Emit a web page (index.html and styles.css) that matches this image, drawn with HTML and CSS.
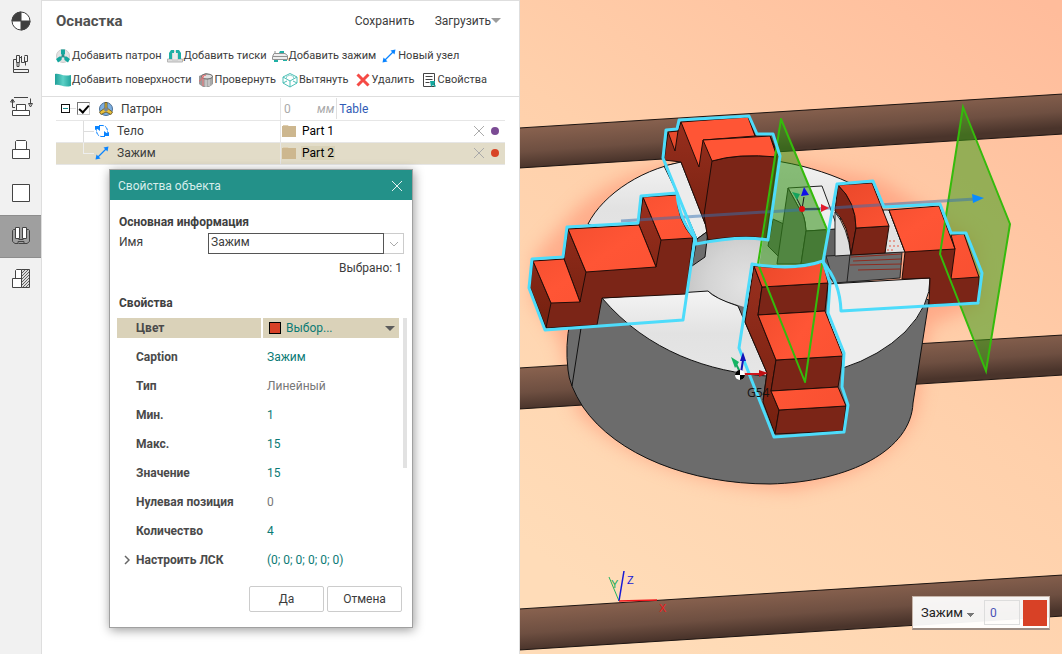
FILE: index.html
```html
<!DOCTYPE html>
<html lang="ru">
<head>
<meta charset="utf-8">
<title>Оснастка</title>
<link rel="stylesheet" href="styles.css">
</head>
<body>
<div class="app">
  <nav class="rail" aria-label="Разделы">
    <button class="rail-btn" type="button" aria-label="Ноль детали">
      <svg class="rail-icon" viewBox="0 0 25 25"><circle cx="13" cy="12" r="9" fill="#fff" stroke="#3f3f3f"/><path d="M13 12V3a9 9 0 0 0-9 9zM13 12h9a9 9 0 0 1-9 9z" fill="#3f3f3f"/></svg>
    </button>
    <button class="rail-btn" type="button" aria-label="Станок">
      <svg class="rail-icon" viewBox="0 0 25 25"><path d="M8 7.500H5.500V17.500M5.500 17.500h15v3h-15zM8.500 3.500h3v7h-3zM13.500 4v6.500h3v-6M16.500 3.500h3v6h-3M9 10.500v4h2v-4M17.500 9.500v4M11.500 5.500h2"/></svg>
    </button>
    <button class="rail-btn" type="button" aria-label="Рабочая зона">
      <svg class="rail-icon" viewBox="0 0 25 25"><path class="pale" d="M8.500 9.500h9v6h-9zM4.500 15.500h17v5h-17z"/><path d="M6 2.500h14M4.500 12.500V5M2.500 7l2-3 2 3zM7 12.500H4.500M22.500 3.500v6M20.500 8.500h4l-2 3.500z"/></svg>
    </button>
    <button class="rail-btn" type="button" aria-label="Деталь">
      <svg class="rail-icon" viewBox="0 0 25 25"><path class="pale" d="M7.500 11.500v-8l1-1h9l1 1v8M4.500 11.500h17v9h-17z"/></svg>
    </button>
    <button class="rail-btn" type="button" aria-label="Заготовка">
      <svg class="rail-icon" viewBox="0 0 25 25"><path class="pale" d="M4.500 3.500h17v17h-17z"/></svg>
    </button>
    <button class="rail-btn is-active" type="button" aria-label="Оснастка" aria-current="page">
      <svg class="rail-icon" viewBox="0 0 25 25"><path d="M7.500 5.500h-2l-1 1v11l2.500 2h3v-2h6v2h3l2.500-2v-11l-1-1h-2M10.500 15.500h5M10.500 19.500h6"/><path class="pale" d="M7.500 3.500h4v11h-4zM14.500 3.500h4v11h-4z"/></svg>
    </button>
    <button class="rail-btn" type="button" aria-label="Ограничения">
      <svg class="rail-icon" viewBox="0 0 25 25"><path class="pale" d="M7.500 11.500v-8l1-1h5v9M4.500 11.500h9v9h-9z"/><path fill="#ddd" d="M13.500 2.500h8v18h-8z"/><path stroke-width=".8" d="M14 6l3-3M14 9l6-6M14 12l7-7M14 15l7-7M14 18l7-7M15 20l6-6M18 20l3-3"/></svg>
    </button>
  </nav>

  <main class="panel">
    <header class="panel-head">
      <h1 class="panel-title">Оснастка</h1>
      <button class="head-btn" type="button">Сохранить</button>
      <button class="head-btn" type="button">Загрузить<span class="caret"></span></button>
    </header>

    <div class="toolbar">
      <div class="tool-row">
        <button class="tool" type="button"><svg class="icon" viewBox="0 0 16 16"><circle cx="8" cy="8" r="6.500" fill="#e3e3e3" stroke="#ccc"/><path d="M6 1.500h4v4.500L8 8 6 6zM7 8.500L6.500 12 3 14.500 1 11l3.500-2.500zM9 8.500l.5 3.500 3.500 2.500 2-3.500-3.500-2.500z" fill="#14a79e"/><circle cx="8" cy="8" r="1.600" fill="#2b8c86"/></svg>Добавить патрон</button>
        <button class="tool" type="button"><svg class="icon" viewBox="0 0 16 16"><path d="M.5 11h15v3H.5z" fill="#dedede" stroke="#b5b5b5"/><path d="M5 3h6v9H5z" fill="#ececec" stroke="#c4c4c4"/><path d="M2 11V5l2-3h3v3H5v6zM14 11V5l-2-3H9v3h2v6z" fill="#1fafa5"/></svg>Добавить тиски</button>
        <button class="tool" type="button"><svg class="icon" viewBox="0 0 16 16"><path d="M.5 8.500L2 5.500h11l2.500 2v4H.5z" fill="#eee" stroke="#929292"/><path d="M1 8.500h14M3 5.500V3" stroke="#929292"/><path d="M8 3h4v2H7zM2 12h4v2H2zM11 12h4v1h-4z" fill="#1fafa5"/></svg>Добавить зажим</button>
        <button class="tool" type="button"><svg class="icon" viewBox="0 0 16 16"><path d="M3.500 12.500l9-9" stroke="#0a84ff" stroke-width="1.300"/><path d="M14.500 1.500l-1 5-4-4zM1.500 14.500l1-5 4 4z" fill="#0a84ff"/></svg>Новый узел</button>
      </div>
      <div class="tool-row">
        <button class="tool" type="button"><svg class="icon" viewBox="0 0 16 16"><path d="M0 2c5-1 7 3 16 1v11c-8 2-11-2-16-1z" fill="url(#sheet)"/></svg>Добавить поверхности</button>
        <button class="tool" type="button"><svg class="icon" viewBox="0 0 16 16"><path d="M1 4l7-3 7 3v8l-4 3H5l-4-3z" fill="#999"/><path d="M4 5v8q5 3 10 0V5" fill="#aaa"/><path d="M8 7v8M11 7v7" stroke="#ddd"/><ellipse cx="9" cy="4.500" rx="5.500" ry="2.500" fill="#ddd" stroke="#666"/><path d="M1 9c3 0 2-5 7-6M5 3v11" fill="none" stroke="#e9686c"/></svg>Провернуть</button>
        <button class="tool" type="button"><svg class="icon" viewBox="0 0 16 16"><path d="M8 1.500l7 3.500v6l-7 4-7-4V5zM1 5l7 4 7-4M8 9v6M1 11l4-2M15 11l-4-2" fill="none" stroke="#4cbfb6"/><path d="M4.500 7V4.500L8 3l3.500 1.500V7" fill="none" stroke="#8dd6d0"/></svg>Вытянуть</button>
        <button class="tool" type="button"><svg class="icon" viewBox="0 0 16 16"><path d="M2.500 2.500l11 11M13.500 2.500l-11 11" stroke="#f54a45" stroke-width="3"/></svg>Удалить</button>
        <button class="tool" type="button"><svg class="icon" viewBox="0 0 16 16"><path d="M2.500 1.500h11v13h-11z" fill="#fff" stroke="#444"/><path d="M4.500 4.500h7M4.500 7.500h7M4.500 10.500h4" stroke="#444"/><path d="M9 9h5v2l-1 1 2 2-1 1-2-2-2 2z" fill="#14a79e"/></svg>Свойства</button>
      </div>
    </div>

    <table class="tree">
      <tbody>
        <tr class="tree-row">
          <td class="tree-name root">
            <button class="expander" type="button" aria-label="Свернуть"></button>
            <span class="dash"></span>
            <input class="tick" type="checkbox" id="node" checked>
            <svg class="icon" viewBox="0 0 16 16"><circle cx="8" cy="8" r="6.500" fill="#7dafe0" stroke="#4d6f94"/><path d="M7 1.500h2v5.500l5.500 4-1.500 2.500L8 11 3 13.500 1.500 11 7 7z" fill="#e9c13c" stroke="#63511b" stroke-width=".8"/><circle cx="8" cy="8.500" r="2" fill="#7b8791"/></svg>
            <label for="node">Патрон</label>
          </td>
          <td class="tree-value">
            <div class="value">
              <input class="offset" type="text" value="0" aria-label="Смещение"><span class="unit">мм</span>
              <a class="link" href="#table">Table</a>
            </div>
          </td>
        </tr>
        <tr class="tree-row">
          <td class="tree-name child">
            <span class="branch"></span>
            <svg class="icon" viewBox="0 0 16 16"><path d="M5 2.500h4q4 1 4.500 5v2M11 13.500H7q-4-1-4.500-5v-2" fill="none" stroke="#0a84ff" stroke-dasharray="5 1"/><path d="M1 3h5v5L3.500 6 1 7zM15 13h-5V8l2.500 2L15 9z" fill="#0a84ff"/></svg>
            <span>Тело</span>
          </td>
          <td class="tree-value">
            <div class="value">
              <svg class="icon" viewBox="0 0 16 16"><path d="M2 2h5l1 2H2z" fill="#e0cfaf"/><path d="M1 3h14v11H1z" fill="#cdb78f"/></svg>
              <span class="part">Part 1</span>
              <button class="clear" type="button" aria-label="Убрать"><svg class="cross" viewBox="0 0 12 12"><path d="M1 1l10 10M11 1L1 11" stroke="#aaa"/></svg></button>
              <span class="dot violet"></span>
            </div>
          </td>
        </tr>
        <tr class="tree-row is-selected">
          <td class="tree-name child">
            <span class="branch last"></span>
            <svg class="icon" viewBox="0 0 16 16"><path d="M3.500 12.500l9-9" stroke="#0a84ff" stroke-width="1.300"/><path d="M14.500 1.500l-1 5-4-4zM1.500 14.500l1-5 4 4z" fill="#0a84ff"/></svg>
            <span>Зажим</span>
          </td>
          <td class="tree-value">
            <div class="value">
              <svg class="icon" viewBox="0 0 16 16"><path d="M2 2h5l1 2H2z" fill="#e0cfaf"/><path d="M1 3h14v11H1z" fill="#cdb78f"/></svg>
              <span class="part">Part 2</span>
              <button class="clear" type="button" aria-label="Убрать"><svg class="cross" viewBox="0 0 12 12"><path d="M1 1l10 10M11 1L1 11" stroke="#aaa"/></svg></button>
              <span class="dot red"></span>
            </div>
          </td>
        </tr>
      </tbody>
    </table>
  </main>

  <section class="viewport" aria-label="3D-вид">
    <svg class="scene" viewBox="520 0 542 654" preserveAspectRatio="xMidYMid slice">
      <defs>
        <linearGradient id="sheet"><stop offset="0" stop-color="#1f9f98"/><stop offset=".5" stop-color="#5cd0c6"/><stop offset="1" stop-color="#23a59d"/></linearGradient>
        <linearGradient id="floor" gradientUnits="userSpaceOnUse" x1="600" y1="600" x2="1040" y2="0"><stop offset="0" stop-color="#ffdcb8"/><stop offset=".5" stop-color="#ffd0ab"/><stop offset="1" stop-color="#ffbc9b"/></linearGradient>
        <linearGradient id="bar1" gradientUnits="userSpaceOnUse" x1="520" y1="128" x2="523" y2="168"><stop offset="0" stop-color="#89624f"/><stop offset=".6" stop-color="#6e4f41"/><stop offset="1" stop-color="#4a342b"/></linearGradient>
        <linearGradient id="bar2" gradientUnits="userSpaceOnUse" x1="520" y1="368" x2="523" y2="409"><stop offset="0" stop-color="#89624f"/><stop offset=".6" stop-color="#6e4f41"/><stop offset="1" stop-color="#4a342b"/></linearGradient>
        <linearGradient id="bar3" gradientUnits="userSpaceOnUse" x1="520" y1="609" x2="523" y2="650"><stop offset="0" stop-color="#89624f"/><stop offset=".6" stop-color="#6e4f41"/><stop offset="1" stop-color="#4a342b"/></linearGradient>
        <linearGradient id="disk" x1="0" y1="0" x2="0" y2="1"><stop offset="0" stop-color="#f4f4f4"/><stop offset=".5" stop-color="#e2e2e2"/><stop offset="1" stop-color="#e6e6e6"/></linearGradient>
        <radialGradient id="bore" gradientUnits="userSpaceOnUse" cx="745" cy="285" r="75"><stop offset="0" stop-color="#e2e2e2"/><stop offset=".5" stop-color="#d4d4d4"/><stop offset="1" stop-color="#bdbdbd"/></radialGradient>
        <linearGradient id="side" x1="0" y1="0" x2="0" y2="1"><stop offset="0" stop-color="#992f1e"/><stop offset="1" stop-color="#74200f"/></linearGradient>
        <linearGradient id="ledge" x1="0" y1="0" x2="1" y2="1"><stop offset="0" stop-color="#ea482a"/><stop offset=".5" stop-color="#ff5535"/><stop offset="1" stop-color="#f85031"/></linearGradient>
        <filter id="soft" x="-20%" y="-20%" width="140%" height="140%"><feGaussianBlur stdDeviation="9"/></filter>
      </defs>

      <rect x="520" width="542" height="654" fill="url(#floor)"/>
      <path d="M575 210Q640 150 780 160L880 180 975 240 980 305 930 325 916 410Q895 470 790 490 650 483 577 412L560 340 532 300 535 255Z" fill="#ff8767" opacity=".5" filter="url(#soft)"/>
      <g stroke="#1d1512">
        <path d="M519 128L1063 94V134L519 168z" fill="url(#bar1)"/>
        <path d="M519 368L1063 335V375L519 409z" fill="url(#bar2)"/>
        <path d="M519 609L1063 575V616L519 650z" fill="url(#bar3)"/>
      </g>
      <path d="M963 107L1010 224 986 371 940 254z" fill="#3e9a17" fill-opacity=".55"/>

      <g stroke="#111" stroke-linejoin="round">
        <path d="M570 322Q565 345 568 370 569 385 583 407C616 455 690 484 770 484 850 482 911 450 913 403L929 300 740 240 600 290z" fill="#6c6c6c"/>
        <path d="M581 328L572 386" fill="none"/>
        <path d="M588 224C603 194 645 166 690 161 745 153 800 160 850 183L835 240 760 245 690 260z" fill="url(#disk)"/>
        <path d="M692 238L708 231 706 220 830 220 838 284 760 312 722 300 708 291 684 294z" fill="url(#bore)" stroke="none"/>
        <path d="M681 162L708 231 697 239 678 195 664 166z" fill="#ececec"/>
        <path d="M697 239L708 231 705 257 692 266z" fill="#6e6e6e"/>
        <path d="M602 298L708 291Q714 298 738 306L767 373V376C710 372 648 352 602 298z" fill="url(#disk)"/>
        <path d="M828 284L930 278Q931 305 905 332 880 356 843 368L828 320z" fill="#ededed"/>
        <path d="M767 373L763 400" fill="none"/>
      </g>

      <!-- back jaw -->
      <g stroke="#210c08" stroke-linejoin="round">
        <path d="M668 132L678 131 681 122 748 117 755 136 770 136 779 158 767 239Q740 235 708 241L706 226 681 162 664 160z" fill="url(#side)"/>
        <path d="M712 161Q740 153 777 157L766 238Q740 235 708 240L704 215z" fill="#7b2517"/>
        <path d="M668 132L678 131 675 151z" fill="#e84a2c"/>
        <path d="M681 122L748 117 755 136 703 140 699 167z" fill="#ff5535"/>
        <path d="M703 140L770 136 777 157Q738 153 712 161z" fill="#ff5535"/>
      </g>

      <!-- centre insert -->
      <g stroke="#222" stroke-linejoin="round">
        <path d="M773 219L788 226 786 256 780 258 768 246z" fill="#6a6a6a"/>
        <path d="M788 188L822 186 838 229 806 231Q805 214 799 208z" fill="#eee"/>
        <path d="M788 188L799 208Q805 214 806 231L801 264H777z" fill="#7a7a7a"/>
        <path d="M806 231L838 229 834 283 820 264H801z" fill="#626262"/>
        <path d="M826 256L902 252 900 278 834 283z" fill="#6d6d6d"/>
        <path d="M835 212Q848 228 851 255L835 256z" fill="#dedede"/>
        <path d="M883 210H889L905 252 885 253z" fill="#e2e2e2"/>
        <path d="M850 255L847 282" fill="none"/>
        <path d="M851 257l50-3M853 261l48-2M850 265l52-1M858 270l42-1" stroke="#8f2b1f"/>
      </g>

      <!-- left jaw -->
      <g stroke="#210c08" stroke-linejoin="round">
        <path d="M533 261L564 259 568 229 639 225 643 197 677 195 680 212 693 237 686 294 602 298 597 325 546 328 530 287z" fill="#7b2517"/>
        <path d="M533 261L551 303 546 328 530 287zM568 229L586 272 580 302 564 259zM643 197L661 240 656 267 639 225z" fill="url(#side)"/>
        <path d="M533 261L564 259 580 302 551 303zM568 229L639 225 656 267 586 272zM643 197L677 195Q677 220 693 238L661 240z" fill="url(#ledge)"/>
      </g>

      <!-- right jaw -->
      <g stroke="#210c08" stroke-linejoin="round">
        <path d="M889 210L905 252 902 279 930 278 929 305 979 302V277L951 240z" fill="#7b2517"/>
        <path d="M838 185Q856 202 856 228L851 255Q849 224 835 211z" fill="#7f2517"/>
        <path d="M856 228L889 226 885 253 851 255z" fill="#7b2517"/>
        <path d="M838 185L872 183 889 226 856 228Q856 202 838 185zM889 210L939 206 955 249 905 252zM951 235L964 234 979 277 951 279 955 249z" fill="url(#ledge)"/>
        <path d="M889 241h8M889 246h11M887 250h6" stroke="#e55b45" stroke-dasharray="2 2"/>
      </g>

      <path d="M781 119L828 234 822 264 759 266z" fill="#2f8f12" fill-opacity=".55"/>
      <path d="M963 107L1010 224 986 371 940 254z" fill="none" stroke="#35bb0c" stroke-width="2"/>

      <!-- front jaw -->
      <g stroke="#210c08" stroke-linejoin="round">
        <path d="M754 266L762 287 758 315 776 360 771 391 779 410 775 434 763 402 767 373 745 322z" fill="url(#side)"/>
        <path d="M762 287L828 283 825 311 758 315zM776 360L843 356 838 387 771 391zM779 410L846 406 843 431 775 434z" fill="#7b2517"/>
        <path d="M754 266Q795 271 823 262L828 283 762 287zM758 315L825 311 843 356 776 360zM771 391L838 387 846 406 779 410z" fill="url(#ledge)"/>
      </g>

      <path d="M621 221L975 199" stroke="#3471b4" stroke-opacity=".5" stroke-width="3"/>
      <path d="M972 194L984 198 973 203z" fill="#0a8bff"/>
      <path d="M828 232L781 119 758 264 805 382 822 264z" fill="none" stroke="#35bb0c" stroke-width="2" stroke-linejoin="round"/>

      <g fill="none" stroke="#4ddcfb" stroke-width="3" stroke-linejoin="round">
        <path d="M663 158L666 130 677 129 679 120 749 116 757 134 773 134 780 156 768 240Q740 235 696 244L695 237z"/>
        <path d="M532 259L563 257 567 227 638 223 641 196 677 193Q679 220 695 238L683 320 545 330 529 288z"/>
        <path d="M837 184L873 181 884 207 940 204 951 233 966 233 982 273 978 303 841 311Q840 282 823 262z"/>
        <path d="M752 264Q795 271 823 261L830 283 828 313 844 353 842 387 848 405 844 432 774 437 739 348z"/>
      </g>

      <g>
        <path d="M802 209L796 197M802 209L804 197M802 209H820" stroke="#161616" fill="none"/>
        <path d="M792 192l8 2-3 6z" fill="#14a35d"/><path d="M801 196l3-9 5 8z" fill="#1010e8"/><path d="M821 204l8 4-8 4z" fill="#e21b2c"/><circle cx="802" cy="209" r="3" fill="#e00c0c"/>
        <path d="M741 374L736 364" stroke="#14a35d" stroke-width="2"/><path d="M731 357l8 5-4 6z" fill="#14b463"/>
        <path d="M741 373L743 360" stroke="#1313b9" stroke-width="2"/><path d="M740 361l3-9 3 9z" fill="#1313b9"/>
        <path d="M744 374H761" stroke="#d1151b" stroke-width="2"/><path d="M759 370l9 3-9 4z" fill="#c01014"/>
        <circle cx="740" cy="375" r="5" fill="#fff"/><path d="M740 375v-5a5 5 0 0 0-5 5zM740 375h5a5 5 0 0 1-5 5z" fill="#000"/>
        <text class="label" x="747" y="397">G54</text>
      </g>

      <g fill="none">
        <path d="M619 601L609 577" stroke="#22b45f"/><path d="M619 601L624 571" stroke="#1719d6" stroke-width="1.500"/><path d="M619 601L657 600" stroke="#f0181c" stroke-width="1.500"/>
      </g>
      <g class="axis"><text x="611" y="588" fill="#16ad57">Y</text><text x="627" y="584" fill="#1719d6">Z</text><text x="659" y="612" fill="#f0181c">X</text></g>
    </svg>

    <form class="quick">
      <select class="quick-select" aria-label="Узел"><option>Зажим</option></select>
      <input class="quick-input" type="text" value="0" aria-label="Значение">
      <button class="quick-color" type="button" aria-label="Цвет"></button>
    </form>
  </section>
</div>

<form class="dialog" role="dialog" aria-labelledby="dialog-title">
  <header class="dialog-head">
    <h2 class="dialog-title" id="dialog-title">Свойства объекта</h2>
    <button class="dialog-close" type="button" aria-label="Закрыть"><svg class="cross" viewBox="0 0 12 12"><path d="M1 1l10 10M11 1L1 11" stroke="#e4f2f1"/></svg></button>
  </header>
  <div class="dialog-body">
    <h3 class="group">Основная информация</h3>
    <div class="field">
      <label class="field-label" for="name">Имя</label>
      <input class="field-input" id="name" type="text" value="Зажим">
      <button class="field-drop" type="button" aria-label="Список"><svg class="chevron" viewBox="0 0 10 6"><path d="M1 1l4 4 4-4" fill="none" stroke="#aaa"/></svg></button>
    </div>
    <p class="count">Выбрано: 1</p>
    <h3 class="group">Свойства</h3>
    <div class="props-wrap">
      <table class="props">
        <tbody>
          <tr class="prop is-current"><th scope="row">Цвет</th><td><button class="color-pick" type="button"><span class="swatch"></span>Выбор...<span class="caret dark"></span></button></td></tr>
          <tr class="prop"><th scope="row">Caption</th><td>Зажим</td></tr>
          <tr class="prop"><th scope="row">Тип</th><td class="muted">Линейный</td></tr>
          <tr class="prop"><th scope="row">Мин.</th><td>1</td></tr>
          <tr class="prop"><th scope="row">Макс.</th><td>15</td></tr>
          <tr class="prop"><th scope="row">Значение</th><td>15</td></tr>
          <tr class="prop"><th scope="row">Нулевая позиция</th><td class="muted">0</td></tr>
          <tr class="prop"><th scope="row">Количество</th><td>4</td></tr>
          <tr class="prop"><th class="expandable" scope="row"><svg class="arrow" viewBox="0 0 6 10"><path d="M1 1l4 4-4 4" fill="none" stroke="#666" stroke-width="1.500"/></svg>Настроить ЛСК</th><td>(0; 0; 0; 0; 0; 0)</td></tr>
        </tbody>
      </table>
      <div class="scroll-thumb"></div>
    </div>
    <div class="actions">
      <button class="btn" type="submit">Да</button>
      <button class="btn" type="button">Отмена</button>
    </div>
  </div>
</form>
</body>
</html>
```
FILE: styles.css
```css
* { box-sizing: border-box; }

body {
  margin: 0;
  font: 12px/16px Roboto, "Noto Sans", sans-serif;
  color: #3c3c3c;
  background: #fff;
}

h1, h2, h3, p { margin: 0; }

button, input, select {
  margin: 0;
  padding: 0;
  border: 0;
  border-radius: 0;
  background: none;
  font: inherit;
  color: inherit;
}

svg { display: block; flex: none; }

.app { display: flex; height: 100vh; }

/* Section rail */
.rail {
  flex: none;
  width: 42px;
  background: #f1f1f1;
  border-right: 1px solid #dedede;
}
.rail-btn {
  display: flex;
  align-items: center;
  justify-content: center;
  width: 100%;
  height: 43px;
}
.rail-btn.is-active { background: #9f9f9f; border-block: 1px solid #8d8d8d; }
.rail-icon { width: 25px; height: 25px; fill: none; stroke: #444; }
.pale { fill: #fff; }

/* Fixture panel */
.panel {
  flex: 0 0 478px;
  border-top: 1px solid #dedede;
  border-right: 1px solid #dedede;
}
.panel-head {
  display: flex;
  align-items: center;
  gap: 20px;
  height: 41px;
  padding: 0 18px 2px 14px;
}
.panel-title { margin-right: auto; font-size: 15px; line-height: 20px; font-weight: 700; color: #505050; }
.head-btn { display: flex; align-items: center; }
.caret {
  border: 5px solid transparent;
  border-top-color: #9c9c9c;
  border-bottom: 0;
}
.caret.dark { margin-left: auto; border-width: 5px; border-top-color: #5c5c5c; border-bottom: 0; }

.toolbar {
  padding: 2px 13px 4px;
  border-bottom: 1px solid #dedede;
  font-size: 11px;
}
.tool-row { display: flex; gap: 5px; height: 24px; }
.tool-row + .tool-row { gap: 6px; }
.tool { display: flex; align-items: center; gap: 1px; white-space: nowrap; }
.icon { width: 16px; height: 16px; }

/* Node tree */
.tree {
  width: calc(100% - 28px);
  margin: 1px 14px 0;
  border-collapse: collapse;
  table-layout: fixed;
}
.tree-row { height: 22px; border-bottom: 1px solid #e6e6e6; }
.tree-row.is-selected { background: #e2dcc8; }
.tree td { padding: 0; height: 22px; }
.tree-name { vertical-align: middle; }
.tree-name > * { display: inline-block; vertical-align: middle; }
.tree-value { border-left: 1px solid #e6e6e6; }
.tree .root { padding-left: 5px; white-space: nowrap; font-size: 0; }
.root label, .child span { font-size: 12px; }
.child { font-size: 0; }
.expander {
  width: 9px;
  height: 9px;
  border: 1px solid #111;
  background: linear-gradient(#128a8a, #128a8a) center / 5px 1px no-repeat;
}
.dash { width: 6px; margin-right: 1px; border-top: 1px solid #ddd; }
.tick {
  appearance: none;
  width: 13px;
  height: 13px;
  margin-right: 8px;
  border: 1px solid #777;
  border-right-color: #ccc;
  border-bottom-color: #ccc;
  position: relative;
}
.tick:checked::after {
  content: "";
  position: absolute;
  left: 3px;
  top: 0;
  width: 4px;
  height: 8px;
  border: solid #000;
  border-width: 0 2px 2px 0;
  rotate: 42deg;
}
.root .icon { margin-right: 7px; }
.branch {
  width: 11px;
  height: 21px;
  margin-left: 27px;
  border-left: 1px solid #ddd;
  background: linear-gradient(#ddd, #ddd) center / 100% 1px no-repeat;
}
.branch.last { background: none; height: 11px; margin-bottom: 10px; border-bottom: 1px solid #eee; border-left-color: #eee; }
.child .icon { margin-right: 7px; }

.value { display: flex; align-items: center; height: 21px; }
.offset { width: 33px; padding-left: 3px; color: #aaa; }
.unit { font-style: italic; color: #aaa; padding: 0 2px 0 3px; }
.link { height: 21px; padding: 1px 0 0 2px; border-left: 1px solid #e0e0e0; line-height: 20px; color: #2f5bb5; text-decoration: none; }
.part { padding: 0 1px; margin-left: 4px; color: #000; }
.is-selected .part { background: #d9d2b8; line-height: 14px; }
.clear { margin-left: auto; }
.cross { width: 12px; height: 12px; }
.dot { width: 8px; height: 8px; margin: 0 6px; border-radius: 50%; }
.violet { background: #7b4b94; }
.red { background: #d84325; }

/* 3D view */
.viewport { flex: 1; min-width: 0; position: relative; overflow: hidden; }
.scene { width: 100%; height: 100%; }
.label { font: 12px "Open Sans", sans-serif; fill: #111; }
.axis { font: 11px "Liberation Sans", sans-serif; }

.quick {
  position: absolute;
  right: 12px;
  bottom: 24px;
  display: flex;
  align-items: center;
  gap: 3px;
  height: 34px;
  padding: 0 2px 0 8px;
  background: rgb(255 255 255 / 94%);
  border: 1px solid #c6b5aa;
  border-bottom: 2px solid #9c8c83;
}
.quick-select {
  appearance: none;
  width: 60px;
  font-size: 13px;
  color: #222;
  background:
    linear-gradient(to bottom left, #777 50%, transparent 50%) 46px 8px / 4px 4px no-repeat,
    linear-gradient(to bottom right, #777 50%, transparent 50%) 50px 8px / 4px 4px no-repeat;
}
.quick-input { width: 36px; height: 25px; padding-left: 5px; border: 1px solid #ddd; color: #4a51b5; }
.quick-color { width: 24px; height: 26px; background: #d84126; }

/* Properties dialog */
.dialog {
  position: absolute;
  left: 109px;
  top: 169px;
  width: 304px;
  background: #fff;
  border: 1px solid #a0a0a0;
  box-shadow: 1px 2px 10px rgb(0 0 0 / 40%);
}
.dialog-head {
  display: flex;
  align-items: center;
  justify-content: space-between;
  height: 30px;
  padding: 2px 9px 0 8px;
  background: #239189;
  color: #d7edeb;
}
.dialog-title { font-size: 12px; line-height: 16px; font-weight: 400; }
.dialog-body { padding: 14px 8px 15px 9px; }
.group { font-size: 12px; line-height: 16px; font-weight: 700; color: #404040; }
.field { display: flex; align-items: flex-start; height: 21px; margin-top: 3px; }
.field-label { width: 89px; line-height: 18px; }
.field-input { flex: 1; min-width: 0; height: 21px; padding: 0 0 3px 2px; border: 1px solid #555; }
.field-drop {
  display: grid;
  place-items: center;
  width: 20px;
  height: 21px;
  border: 1px solid #ccc;
  border-left: 0;
}
.chevron { width: 10px; height: 6px; }
.count { margin: 6px 2px 19px 0; text-align: right; }
.props-wrap { display: flex; align-items: flex-start; gap: 4px; margin: 7px -3px 0 -2px; }
.props { flex: 1; display: block; }
.props tbody { display: grid; gap: 9px; }
.prop { display: grid; grid-template-columns: 144px 1fr; gap: 2px; height: 20px; line-height: 20px; }
.prop th { padding: 0 0 0 19px; text-align: left; font-weight: 700; color: #4a4a4a; }
.prop td { padding: 0 4px; color: #0b7a75; }
.prop td.muted { color: #777; }
.prop.is-current th, .prop.is-current td { background: #dad2b9; }
.prop .expandable { display: flex; align-items: center; gap: 6px; padding-left: 7px; }
.arrow { width: 6px; height: 10px; }
.color-pick { display: flex; align-items: center; width: 100%; height: 20px; padding-left: 2px; }
.swatch { width: 12px; height: 12px; margin-right: 5px; background: #d84126; border: 1px solid #000; }
.scroll-thumb { width: 4px; height: 150px; background: #e2e2e2; }
.actions { display: flex; justify-content: flex-end; gap: 3px; margin: 16px 2px 0 0; }
.btn {
  width: 75px;
  height: 26px;
  border: 1px solid #ccc;
  border-radius: 2px;
}
```
